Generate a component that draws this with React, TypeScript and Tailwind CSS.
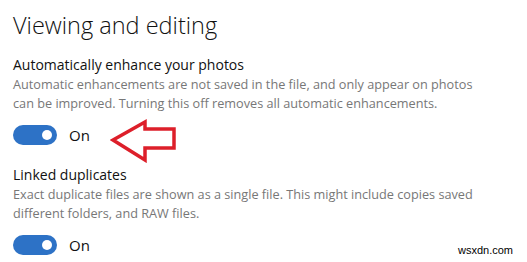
export default function App() {
  return (
    <div className="w-[527px] h-[262px] overflow-hidden bg-white relative" style={{ fontFamily: '"Open Sans", sans-serif' }}>
      <div className="w-[600px] pl-[13px]">
        <h1 className="text-[23.5px] font-light leading-[30px] pt-[10px] text-[#111]">Viewing and editing</h1>

        <div className="mt-[15px]">
          <div className="text-[14px] leading-[20px] text-[#111]">Automatically enhance your photos</div>
          <div className="text-[12.7px] leading-[19px] text-[#777]">
            <div className="whitespace-nowrap">Automatic enhancements are not saved in the file, and only appear on photos</div>
            <div className="whitespace-nowrap">can be improved. Turning this off removes all automatic enhancements.</div>
          </div>
          <div className="flex items-center mt-[12px] h-[20px]">
            <Toggle />
            <span className="ml-[12px] text-[15px] text-[#111]">On</span>
            <svg width="68" height="44" viewBox="0 0 68 44" className="ml-[20px] mt-[12px]">
              <polygon
                points="3,21 35,3 35,10 64,10 64,29 35,29 35,41"
                fill="white"
                stroke="#dd1f2a"
                strokeWidth="3.5"
                strokeLinejoin="miter"
              />
            </svg>
          </div>
        </div>

        <div className="mt-[20px]">
          <div className="text-[14px] leading-[20px] text-[#111]">Linked duplicates</div>
          <div className="text-[12.7px] leading-[19px] text-[#777]">
            <div className="whitespace-nowrap">Exact duplicate files are shown as a single file. This might include copies saved</div>
            <div className="whitespace-nowrap">different folders, and RAW files.</div>
          </div>
          <div className="flex items-center mt-[12px] h-[20px]">
            <Toggle />
            <span className="ml-[12px] text-[15px] text-[#111]">On</span>
          </div>
        </div>
      </div>

      <div
        className="absolute right-[14px] bottom-[4px] text-[11px] text-black"
        style={{ fontFamily: '"Liberation Sans", Arial, sans-serif' }}
      >
        wsxdn.com
      </div>
    </div>
  )
}

function Toggle() {
  return (
    <div className="w-[44px] h-[20px] rounded-full bg-[#2d72c6] flex items-center justify-end pr-[5px]">
      <div className="w-[10px] h-[10px] rounded-full bg-white" />
    </div>
  )
}
